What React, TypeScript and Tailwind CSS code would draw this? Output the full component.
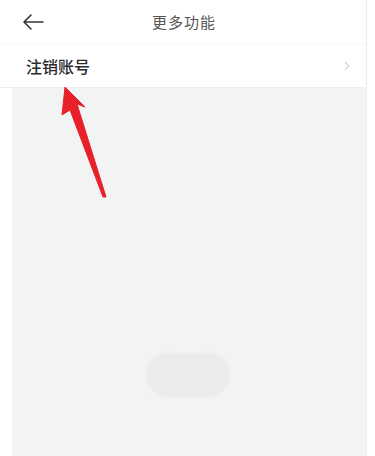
import { ChevronRight } from 'lucide-react';

export default function App() {
  return (
    <div
      className="relative w-[375px] h-[456px] bg-white flex overflow-hidden"
      style={{ fontFamily: '"Noto Sans CJK SC", "Noto Sans", sans-serif' }}
    >
      {/* Main column */}
      <div className="w-[367px] h-full flex flex-col border-r border-[#ececec]">
        {/* Header */}
        <div className="relative h-[44px] flex items-center justify-center shrink-0">
          <svg className="absolute left-[21px] top-[13px]" width="24" height="18" viewBox="0 0 24 18" fill="none">
            <path d="M22 9H3M10 2L3 9l7 7" stroke="#333" strokeWidth="1.6" strokeLinecap="round" strokeLinejoin="round" />
          </svg>
          <span className="text-[15px] text-[#555] tracking-[1px] ml-[2px]">更多功能</span>
        </div>

        {/* Row */}
        <div className="h-[44px] flex items-center justify-between pl-[26px] pr-[12px] shrink-0 border-t border-[#f7f7f7] border-b border-b-[#eeeeee]">
          <span className="text-[16px] font-medium text-[#2a2a2a]">注销账号</span>
          <ChevronRight className="w-[14px] h-[14px] text-[#d6d6d6]" strokeWidth={2} />
        </div>

        {/* Gray body */}
        <div className="flex-1 ml-[12px] bg-[#f2f3f3] flex flex-col items-center">
          <div className="mt-[265px] mr-[3px] w-[84px] h-[44px] rounded-full bg-[#ebebeb] blur-[1px]" />
        </div>
      </div>

      {/* Red arrow annotation */}
      <svg className="absolute left-0 top-0 pointer-events-none" width="375" height="456" viewBox="0 0 375 456">
        <path
          d="M65 87 L85 107 L77 104 L106 197 L103 197 L70 110 L62 115 Z"
          fill="#e8202a"
          stroke="#e8202a"
          strokeWidth="1"
          strokeLinejoin="round"
        />
      </svg>
    </div>
  );
}
